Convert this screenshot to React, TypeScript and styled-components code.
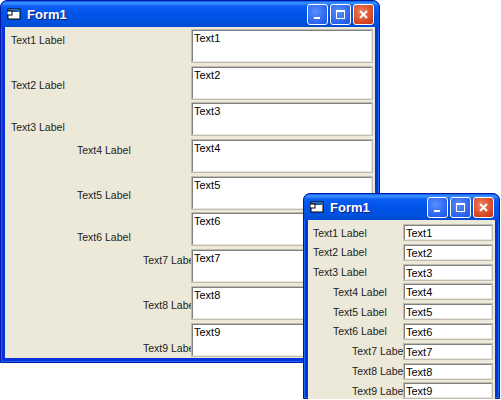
import React from "react";
import styled, { createGlobalStyle } from "styled-components";

const G = createGlobalStyle`
  body { margin: 0; background: #fff; font-family: "Liberation Sans", sans-serif; }
`;

const Win = styled.div<{ $x: number; $y: number; $w: number; $h: number }>`
  position: absolute; left: ${p => p.$x}px; top: ${p => p.$y}px;
  width: ${p => p.$w}px; height: ${p => p.$h}px; box-sizing: border-box;
  background: #0831d9; border-radius: 7px 7px 0 0;
  display: flex; flex-direction: column; padding: 0 4px 4px;
  border: 1px solid #0019a8;
  box-shadow: inset 0 0 0 1px #166aee;
`;
const Title = styled.div`
  height: 26px; flex: none; margin: 0 -4px; border-radius: 7px 7px 0 0;
  background: linear-gradient(#0a5fef 0%, #3d95ff 8%, #0a5ef5 20%, #0053e8 50%, #0051e0 80%, #004bd0 100%);
  display: flex; align-items: center; padding: 0 5px 0 6px; gap: 6px;
  color: #fff; font: bold 13px "Liberation Sans", sans-serif; text-shadow: 1px 1px #0f1f80;
`;
const TitleText = styled.span` flex: 1; `;
const Btn = styled.div<{ $red?: boolean }>`
  width: 21px; height: 21px; box-sizing: border-box; border: 1px solid #fff; border-radius: 3px;
  background: ${p => p.$red ? "radial-gradient(circle at 40% 35%, #f08060, #d4451e 70%, #b83010)" : "radial-gradient(circle at 40% 35%, #5a8fff, #2a63f0 70%, #1c4ed0)"};
  display: flex; align-items: center; justify-content: center; margin-left: -4px;
`;
const Client = styled.div`
  flex: 1; background: #ece9d8; position: relative;
  font: 10.5px "Liberation Sans", sans-serif; color: #222;
`;
const BigGrid = styled.div`
  display: grid; grid-template-columns: 186px 182px; grid-auto-rows: 34px; row-gap: 2.7px;
  padding-top: 2px;
`;
const Lbl = styled.div<{ $ind: number; $al: string }>`
  padding-left: ${p => p.$ind}px; align-self: ${p => p.$al}; white-space: nowrap;
  padding-bottom: ${p => p.$al === "end" ? 3 : 0}px;
  padding-top: ${p => p.$al === "start" ? 5 : p.$al === "center" ? 4 : 0}px;
`;
const Box = styled.div`
  background: #fff; box-sizing: border-box; border: 2px solid; border-color: #7f7f7f #e8e6dc #e8e6dc #7f7f7f;
  outline: 1px solid #c0bdb0; outline-offset: -1px;
  padding: 1px 1px; font: 11px "Liberation Sans", sans-serif; color: #000; overflow: hidden;
`;
const SmallGrid = styled.div`
  display: grid; grid-template-columns: 95px 90px; grid-auto-rows: 17px; row-gap: 2.8px; padding-top: 4px;
`;
const SLbl = styled.div<{ $ind: number }>`
  padding-left: ${p => p.$ind}px; align-self: center; white-space: nowrap;
`;
const SBox = styled(Box)` font-size: 11px; line-height: 12px; `;

const Icon = () => (
  <svg width="14" height="12" viewBox="0 0 14 12">
    <rect x="1" y="1" width="12" height="10" fill="#fff" stroke="#000" />
    <rect x="1.5" y="1.5" width="11" height="2.5" fill="#1060b0" />
    <rect x="0" y="3" width="5" height="4" fill="#fff" stroke="#000" />
  </svg>
);
const Buttons = () => (
  <>
    <Btn><svg width="13" height="13"><rect x="3" y="9" width="6" height="2" fill="#fff" /></svg></Btn>
    <Btn><svg width="13" height="13"><rect x="2.5" y="2.5" width="8" height="8" fill="none" stroke="#fff" /><rect x="2" y="2" width="9" height="2" fill="#fff" /></svg></Btn>
    <Btn $red><svg width="13" height="13"><path d="M3 3 L10 10 M10 3 L3 10" stroke="#fff" strokeWidth="2" /></svg></Btn>
  </>
);

const al = ["start", "center", "end"];
const ind = [6, 72, 138];

export default function App() {
  const rows = [1, 2, 3, 4, 5, 6, 7, 8, 9];
  return (
    <>
      <G />
      <Win $x={0} $y={0} $w={380} $h={363}>
        <Title><Icon /><TitleText>Form1</TitleText><Buttons /></Title>
        <Client>
          <BigGrid>
            {rows.map(i => (
              <React.Fragment key={i}>
                <Lbl $ind={ind[Math.floor((i - 1) / 3)]} $al={al[(i - 1) % 3]}>Text{i} Label</Lbl>
                <Box>Text{i}</Box>
              </React.Fragment>
            ))}
          </BigGrid>
        </Client>
      </Win>
      <Win $x={303} $y={193} $w={197} $h={206}>
        <Title><Icon /><TitleText>Form1</TitleText><Buttons /></Title>
        <Client>
          <SmallGrid>
            {rows.map(i => (
              <React.Fragment key={i}>
                <SLbl $ind={[5, 25, 44][Math.floor((i - 1) / 3)]}>Text{i} Label</SLbl>
                <SBox>Text{i}</SBox>
              </React.Fragment>
            ))}
          </SmallGrid>
        </Client>
      </Win>
    </>
  );
}
